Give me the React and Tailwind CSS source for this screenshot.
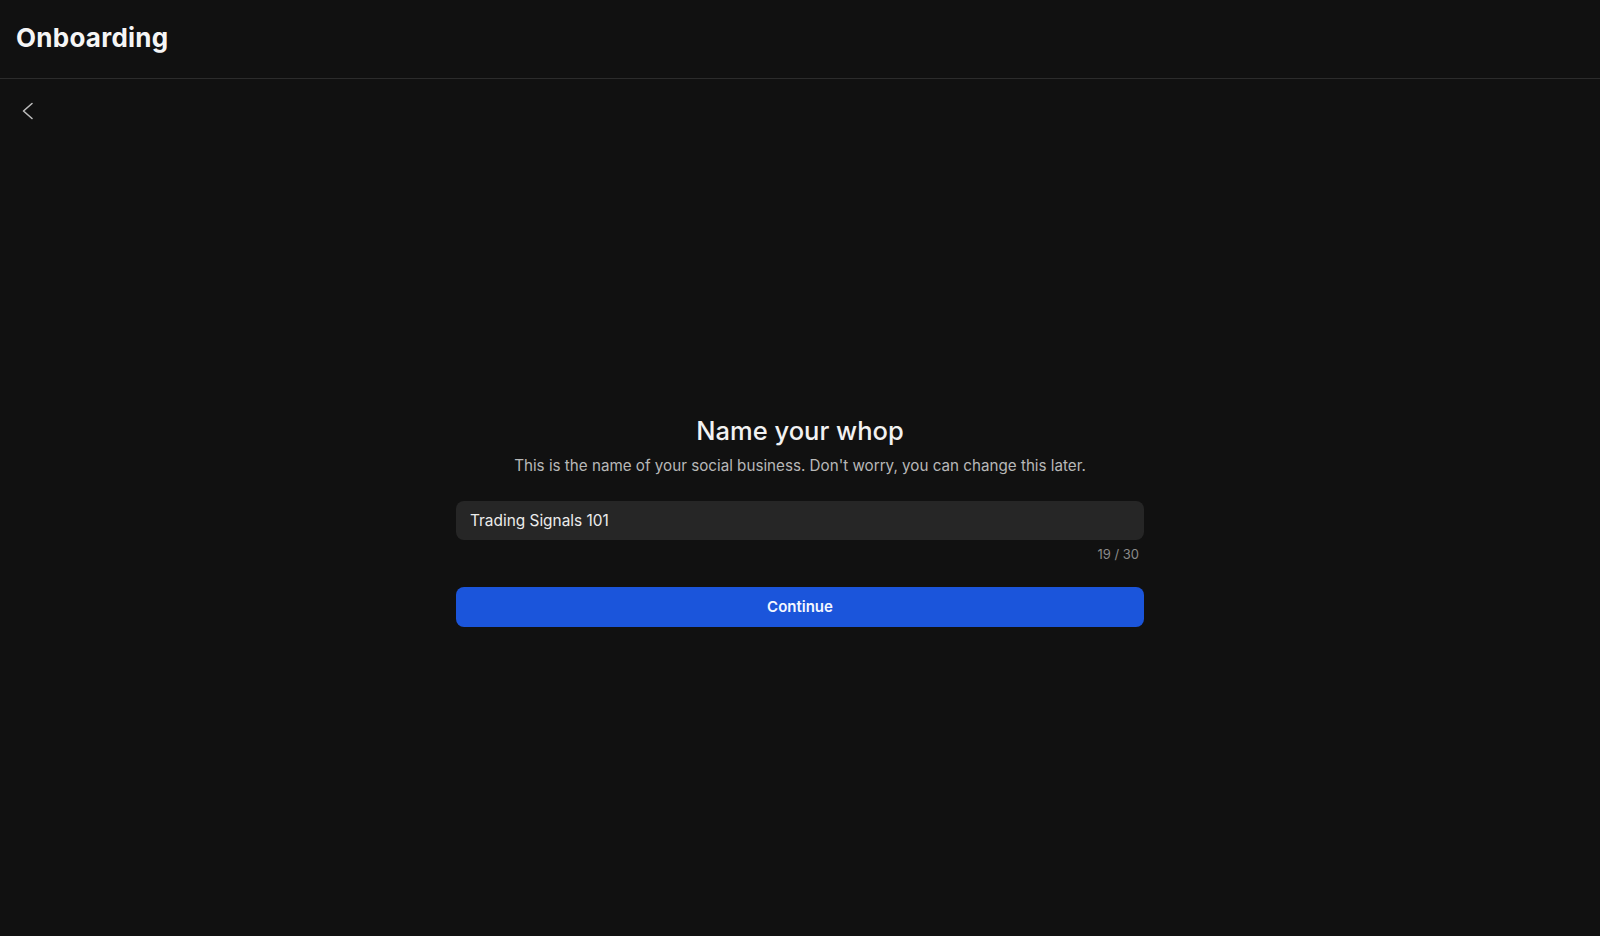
import React from "react";

const App = () => {
  return (
    <div
      className="min-h-screen w-full bg-[#111111] text-white"
      style={{ fontFamily: "Inter, 'Noto Sans', sans-serif" }}
    >
      <header className="h-[79px] border-b border-[#2c2c2c] px-4 pt-[22px]">
        <h1 className="text-[26px] font-bold leading-8 tracking-[0.01em] text-[#f5f5f5]">
          Onboarding
        </h1>
      </header>

      <div className="px-[22px] pt-[23px]">
        <button className="block h-[18px] w-[12px] text-[#bdbdbd]">
          <svg
            width="12"
            height="18"
            viewBox="0 0 12 18"
            fill="none"
            stroke="currentColor"
            strokeWidth="1.6"
            strokeLinecap="round"
            strokeLinejoin="round"
          >
            <polyline points="10,1.5 1.5,9 10,16.5" />
          </svg>
        </button>
      </div>

      <main className="mx-auto mt-[295px] flex w-[688px] flex-col items-center">
        <h2 className="text-[25.5px] font-medium leading-8 text-[#f2f2f2]">
          Name your whop
        </h2>
        <p className="mt-[8px] text-[15.2px] leading-[22px] text-[#b8b8b8]">
          This is the name of your social business. Don't worry, you can change this later.
        </p>

        <div className="mt-6 w-full">
          <div className="flex h-[39px] w-full items-center rounded-lg bg-[#262626] px-[14px]">
            <span className="text-[15.4px] text-[#ececec]">Trading Signals 101</span>
          </div>
          <div className="mt-[5px] pr-[5px] text-right text-[13px] leading-[18px] text-[#8a8a8a]">
            19 / 30
          </div>
        </div>

        <button className="mt-6 flex h-[40px] w-full items-center justify-center rounded-lg bg-[#1b55db] text-[15px] font-semibold text-[#f4f7ff]">
          Continue
        </button>
      </main>
    </div>
  );
};

export default App;
